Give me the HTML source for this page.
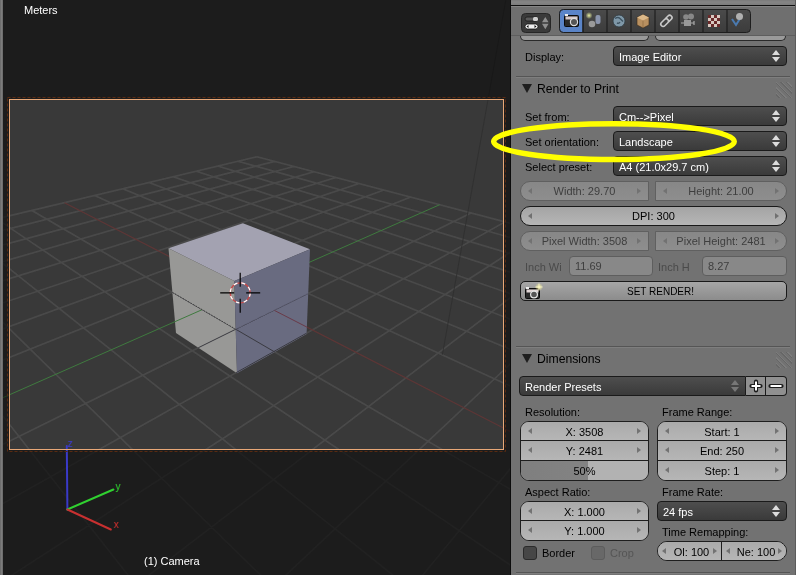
<!DOCTYPE html>
<html><head><meta charset="utf-8">
<style>
*{box-sizing:border-box;margin:0;padding:0}
html,body{width:796px;height:575px;overflow:hidden;background:#1c1c1c;font-family:"Liberation Sans",sans-serif;font-size:11px}
#panel{will-change:transform;position:absolute;left:511px;top:0;width:285px;height:575px;background:#727272;overflow:hidden}
.lbl{position:absolute;color:#000;font-size:11px;line-height:15px;white-space:nowrap}
.dl{color:#4a4a4a}
.dl2{color:#555}
.sep{position:absolute;left:5px;width:274px;height:2px;border-top:1px solid #555;border-bottom:1px solid #7e7e7e}
.phdr{position:absolute;left:0;width:285px;height:20px}
.phdr span{position:absolute;left:26px;top:0px;font-size:12.2px;color:#000;line-height:14px}
.tri{position:absolute;left:10.5px;top:1.5px;width:0;height:0;border-left:5.3px solid transparent;border-right:5.3px solid transparent;border-top:9.5px solid #1e1e1e}
.grip{position:absolute;left:265px;top:0;width:16px;height:16px;background:repeating-linear-gradient(45deg,transparent 0 2px,rgba(0,0,0,.10) 2px 3px,rgba(255,255,255,.07) 3px 4px)}
.menu{position:absolute;height:20px;border:1px solid #1a1a1a;border-radius:4px;background:linear-gradient(#4e4e4e,#3a3a3a);color:#fff}
.menu span{position:absolute;left:5px;top:4px;line-height:13px;white-space:nowrap}
.ud2{position:absolute;right:6px;top:3px;width:8px;height:13px}
.ud2:before{content:"";position:absolute;left:0;top:0;border-left:4px solid transparent;border-right:4px solid transparent;border-bottom:5px solid #ddd}
.ud2:after{content:"";position:absolute;left:0;top:7px;border-left:4px solid transparent;border-right:4px solid transparent;border-top:5px solid #ddd}
.ud2.dim:before{border-bottom-color:#777}.ud2.dim:after{border-top-color:#777}
.num{position:absolute;height:20px;border:1px solid #191919;background:linear-gradient(#a4a4a4,#b6b6b6);color:#000;text-align:center}
.num span{display:block;line-height:18px;white-space:nowrap}
.num.dis{border-color:#606060;background:linear-gradient(#878787,#8e8e8e);color:#3e3e3e}
.al,.ar{position:absolute;top:6px;width:0;height:0;border-top:3.5px solid transparent;border-bottom:3.5px solid transparent}
.al{left:7px;border-right:4px solid rgba(0,0,0,.35)}
.ar{right:7px;border-left:4px solid rgba(0,0,0,.35)}
.dis .al{border-right-color:rgba(0,0,0,.18)}.dis .ar{border-left-color:rgba(0,0,0,.18)}
.txt{position:absolute;height:20px;border:1px solid #5e5e5e;border-radius:4px;background:#888}
.txt span{position:absolute;left:5px;top:3px;line-height:13px;color:#3e3e3e}
.btn{position:absolute;height:20px;border:1px solid #191919;border-radius:5px;background:linear-gradient(#a6a6a6,#8c8c8c);text-align:center}
.btn span{line-height:18px;color:#000}
.pm{position:absolute;height:20px;border:1px solid #1a1a1a;border-left:none;background:#909090}
.plus,.minus{position:absolute}
.col{position:absolute;border:1px solid #1e1e1e;border-radius:9px;overflow:hidden;background:#b0b0b0}
.row{position:relative;height:19px;border-bottom:1px solid #1e1e1e;background:linear-gradient(#aaaaaa,#b6b6b6);text-align:center}
.row:nth-child(2){height:20px}.row:last-child{border-bottom:none;height:19px}
.row span{line-height:20px;white-space:nowrap}
.row.sl{background:linear-gradient(90deg,#7f7f7f 0,#838383 53%,#b2b2b2 53%)}
.chk{position:absolute;width:14px;height:14px;border:1px solid #2a2a2a;border-radius:3px;background:#464646}
.chk.dis{border-color:#5c5c5c;background:#686868}
.tog{position:absolute;left:10px;top:13px;width:30px;height:20px;border-radius:4px;background:#3a3a3a;border:1px solid #262626}
.tabs{position:absolute;left:48px;top:9px;width:192px;height:24px;display:flex;border:1px solid #222;border-radius:4px;overflow:hidden;background:#3e3e3e}
.tab{flex:1;border-right:1px solid #222;background:linear-gradient(#474747,#3a3a3a)}
.tab.last{border-right:none}
.tab.act{background:#5680c2}
.partial{position:absolute;top:36px;height:5px;background:#9a9a9a;border:1px solid #2a2a2a;border-top:none}
</style></head><body>
<svg width="511" height="575" viewBox="0 0 511 575" style="position:absolute;left:0;top:0"><rect x="0" y="0" width="511" height="575" fill="#393939"/><filter id="bl" x="-5%" y="-5%" width="110%" height="110%"><feGaussianBlur stdDeviation="0.45"/></filter><clipPath id="fin"><rect x="9" y="99" width="495" height="351"/></clipPath><clipPath id="fout"><path d="M0 0H511V575H0Z M9 99V450H504V99Z" clip-rule="evenodd"/></clipPath><g clip-path="url(#fin)"><path d="M-295.1 288.6L256.9 156.7 M-295.1 288.6L-67.7 2806.4 M-293.5 305.5L274.8 161.4 M-233.9 274.0L267.4 1828.1 M-291.8 324.5L293.8 166.4 M-178.7 260.8L429.0 1356.2 M-289.9 346.1L314.1 171.7 M-128.7 248.9L524.2 1078.4 M-287.6 370.8L335.8 177.4 M-83.2 238.0L586.9 895.3 M-285.1 399.4L359.0 183.5 M-41.5 228.0L631.3 765.6 M-282.0 432.8L383.9 190.1 M-3.3 218.9L664.4 668.9 M-278.5 472.4L410.7 197.1 M31.9 210.5L690.1 594.0 M-268.9 578.6L471.0 213.0 M94.7 195.5L727.2 485.5 M-262.2 652.1L505.0 221.9 M122.8 188.8L741.1 445.0 M-253.6 747.2L542.1 231.6 M148.9 182.5L752.8 410.8 M-242.1 875.2L582.6 242.3 M173.3 176.7L762.9 381.5 M-225.7 1056.4L627.2 254.0 M196.2 171.2L771.5 356.2 M-200.7 1332.9L676.3 266.9 M217.7 166.1L779.1 334.1 M-157.9 1806.7L730.9 281.2 M237.9 161.2L785.8 314.6 M-67.7 2806.4L791.7 297.2 M256.9 156.7L791.7 297.2" stroke="#4a4a4a" stroke-width="1.6" fill="none" filter="url(#bl)"/></g><g clip-path="url(#fout)"><path d="M-295.1 288.6L256.9 156.7 M-295.1 288.6L-67.7 2806.4 M-293.5 305.5L274.8 161.4 M-233.9 274.0L267.4 1828.1 M-291.8 324.5L293.8 166.4 M-178.7 260.8L429.0 1356.2 M-289.9 346.1L314.1 171.7 M-128.7 248.9L524.2 1078.4 M-287.6 370.8L335.8 177.4 M-83.2 238.0L586.9 895.3 M-285.1 399.4L359.0 183.5 M-41.5 228.0L631.3 765.6 M-282.0 432.8L383.9 190.1 M-3.3 218.9L664.4 668.9 M-278.5 472.4L410.7 197.1 M31.9 210.5L690.1 594.0 M-268.9 578.6L471.0 213.0 M94.7 195.5L727.2 485.5 M-262.2 652.1L505.0 221.9 M122.8 188.8L741.1 445.0 M-253.6 747.2L542.1 231.6 M148.9 182.5L752.8 410.8 M-242.1 875.2L582.6 242.3 M173.3 176.7L762.9 381.5 M-225.7 1056.4L627.2 254.0 M196.2 171.2L771.5 356.2 M-200.7 1332.9L676.3 266.9 M217.7 166.1L779.1 334.1 M-157.9 1806.7L730.9 281.2 M237.9 161.2L785.8 314.6 M-67.7 2806.4L791.7 297.2 M256.9 156.7L791.7 297.2" stroke="#434343" stroke-width="1.4" fill="none" filter="url(#bl)"/></g><line x1="64.5" y1="202.7" x2="710.6" y2="534.3" stroke="#5e3636" stroke-width="1.2"/><line x1="-274.2" y1="520.1" x2="439.7" y2="204.7" stroke="#3f7a3f" stroke-width="1"/><line x1="442.4" y1="354.7" x2="555.9" y2="-280.3" stroke="#2f2f2f" stroke-width="1" stroke-opacity="0.85"/><polygon points="168.5,248.3 234.3,281.0 310.0,249.2 242.9,223.3" fill="#a3a2b1"/><polygon points="168.5,248.3 234.3,281.0 237.0,373.2 176.0,332.9" fill="#989896"/><polygon points="234.3,281.0 310.0,249.2 306.6,334.1 237.0,373.2" fill="#696b80"/><clipPath id="lh"><polygon points="172.4,292.3 235.7,329.2 308.2,293.4 306.6,334.1 237.0,373.2 176.0,332.9"/></clipPath><g clip-path="url(#lh)"><path d="M-295.1 288.6L256.9 156.7 M-295.1 288.6L-67.7 2806.4 M-293.5 305.5L274.8 161.4 M-233.9 274.0L267.4 1828.1 M-291.8 324.5L293.8 166.4 M-178.7 260.8L429.0 1356.2 M-289.9 346.1L314.1 171.7 M-128.7 248.9L524.2 1078.4 M-287.6 370.8L335.8 177.4 M-83.2 238.0L586.9 895.3 M-285.1 399.4L359.0 183.5 M-41.5 228.0L631.3 765.6 M-282.0 432.8L383.9 190.1 M-3.3 218.9L664.4 668.9 M-278.5 472.4L410.7 197.1 M31.9 210.5L690.1 594.0 M-268.9 578.6L471.0 213.0 M94.7 195.5L727.2 485.5 M-262.2 652.1L505.0 221.9 M122.8 188.8L741.1 445.0 M-253.6 747.2L542.1 231.6 M148.9 182.5L752.8 410.8 M-242.1 875.2L582.6 242.3 M173.3 176.7L762.9 381.5 M-225.7 1056.4L627.2 254.0 M196.2 171.2L771.5 356.2 M-200.7 1332.9L676.3 266.9 M217.7 166.1L779.1 334.1 M-157.9 1806.7L730.9 281.2 M237.9 161.2L785.8 314.6 M-67.7 2806.4L791.7 297.2 M256.9 156.7L791.7 297.2" stroke="#3a3a40" stroke-width="1" fill="none"/><line x1="64.5" y1="202.7" x2="710.6" y2="534.3" stroke="#6a3a48" stroke-width="1"/><line x1="-274.2" y1="520.1" x2="439.7" y2="204.7" stroke="#3f7a3f" stroke-width="1"/></g><line x1="172.4" y1="292.3" x2="235.7" y2="329.2" stroke="#404040" stroke-width="1" stroke-dasharray="1.5 1.5"/><line x1="235.7" y1="329.2" x2="308.2" y2="293.4" stroke="#5a5a70" stroke-width="1" stroke-dasharray="1.5 1.5"/><path d="M0 0H511V575H0Z M9 99V450H504V99Z" fill="#000" fill-opacity="0.5" fill-rule="evenodd"/><g stroke-width="2" stroke-linecap="round"><line x1="67.4" y1="509.5" x2="66.8" y2="446" stroke="#3a3ac8"/><line x1="67.4" y1="509.5" x2="113.4" y2="489.5" stroke="#30d030"/><line x1="67.4" y1="509.5" x2="110.8" y2="529.5" stroke="#c83030"/></g><text x="68" y="447" fill="#3a3ac8" font-size="10" font-family="Liberation Sans">z</text><text x="115.5" y="490" fill="#30d030" font-size="10" font-family="Liberation Sans">y</text><text x="113.5" y="528" fill="#c83030" font-size="10" font-family="Liberation Sans">x</text><rect x="7.5" y="97.5" width="498" height="354" fill="none" stroke="#5a2a10" stroke-width="1" stroke-dasharray="3 2"/><rect x="9.5" y="99.5" width="494" height="350" fill="none" stroke="#e8a878" stroke-width="1"/><circle cx="240.2" cy="292.8" r="10" fill="none" stroke="#c84848" stroke-width="1.3"/><circle cx="240.2" cy="292.8" r="10" fill="none" stroke="#fff" stroke-width="1.3" stroke-dasharray="4 4"/><path d="M220.2 292.8h14M246.2 292.8h14M240.2 272.8v14M240.2 298.8v14" stroke="#000" stroke-width="1.2"/><rect x="0" y="0" width="3" height="575" fill="#6e6e6e"/><rect x="1" y="0" width="1" height="575" fill="#7c7c7c"/><rect x="510" y="0" width="1" height="575" fill="#0c0c0c"/></svg><div id="panel">
  <div style="position:absolute;left:0;top:0;width:285px;height:5px;background:linear-gradient(#7a7a7a,#858585 40%,#7c7c7c)"></div>
  <div style="position:absolute;left:0;top:6px;width:285px;height:30px;background:#6f6f6f"></div>
  <div style="position:absolute;left:0;top:4.5px;width:285px;height:1.5px;background:#0e0e0e"></div>
  <div style="position:absolute;left:0;top:6px;width:285px;height:1px;background:#858585"></div>
  <!-- header -->
  <svg width="285" height="36" style="position:absolute;left:0;top:0">
    <defs>
      <linearGradient id="tg" x1="0" y1="0" x2="0" y2="1"><stop offset="0" stop-color="#4a4a4a"/><stop offset="1" stop-color="#3c3c3c"/></linearGradient>
      <radialGradient id="glow" cx="0.5" cy="0.5" r="0.5"><stop offset="0" stop-color="#e8f0a0"/><stop offset="1" stop-color="#e8f0a0" stop-opacity="0"/></radialGradient>
    </defs>
    <rect x="10.5" y="13.5" width="29" height="19" rx="4" fill="#3a3a3a" stroke="#262626"/>
    <rect x="14" y="17" width="13" height="4" rx="2" fill="#5a5a5a" stroke="#1a1a1a" stroke-width=".8"/>
    <rect x="22" y="17" width="5" height="4" rx="1.5" fill="#d0d0d0"/>
    <rect x="14" y="24" width="13" height="5" rx="2.5" fill="#f0f0f0" stroke="#111" stroke-width=".8"/>
    <path d="M15.5 26.5l2-1.6v3.2zM25.5 26.5l-2-1.6v3.2z" fill="#111"/>
    <path d="M31 22.2l3.3-5.2 3.3 5.2zM31 23.8l3.3 5.4 3.3-5.4z" fill="#909090"/>
    <rect x="48.5" y="9.5" width="191" height="23" rx="4" fill="url(#tg)" stroke="#1e1e1e"/>
    <path d="M52.5 9.5h19.5v23h-19.5a4 4 0 0 1-4-4v-15a4 4 0 0 1 4-4z" fill="#5a84c8" stroke="#1e1e1e"/>
    <path d="M72 10v22M96 10v22M120 10v22M144 10v22M168 10v22M192 10v22M216 10v22" stroke="#1e1e1e" stroke-width="1.2"/>
    <!-- camera icon -->
    <rect x="53.5" y="15.5" width="14" height="11" rx="1" fill="#2a2a2a" stroke="#0a0a0a"/>
    <rect x="54.5" y="16.5" width="12" height="3" fill="#d8c8c8"/>
    <rect x="54" y="14" width="3" height="2" fill="#eee"/>
    <circle cx="63" cy="22" r="3.6" fill="#555" stroke="#ddd" stroke-width="1.2"/>
    <!-- scene -->
    <circle cx="78" cy="15.5" r="3.5" fill="url(#glow)"/>
    <circle cx="81" cy="24" r="3.3" fill="#9a9a9a"/>
    <rect x="84.5" y="15" width="5" height="9" rx="2" fill="#8a94ac"/>
    <!-- world -->
    <circle cx="108" cy="21" r="6" fill="#7f98a8" stroke="#2e3a40" stroke-width=".8"/>
    <path d="M104 18.5q3-2 5 0t3 3M106 23q2 1 3-1" stroke="#3e5260" stroke-width="1.4" fill="none"/>
    <!-- object cube -->
    <path d="M132 14.5l6 3v7.5l-6 3-6-3v-7.5z" fill="#b89060" stroke="#3a2a18" stroke-width=".6"/>
    <path d="M126 17.5l6 3 6-3-6-3z" fill="#dcb888"/>
    <path d="M132 20.5v7" stroke="#8a6a40" stroke-width=".7"/>
    <!-- chain -->
    <path d="M150.5 22.5l3-3a2.3 2.3 0 0 1 3.3 3.3l-3 3a2.3 2.3 0 0 1-3.3-3.3z M154 19l3-3a2.3 2.3 0 0 1 3.3 3.3l-3 3" stroke="#c8c8c8" stroke-width="1.6" fill="none"/>
    <!-- movie camera -->
    <circle cx="175" cy="17" r="2.8" fill="#888"/><circle cx="180" cy="16.5" r="3" fill="#888"/>
    <rect x="173" y="20" width="7" height="6" fill="#999"/><path d="M170 23h3M180 23h3v-2v4" stroke="#aaa" stroke-width="1.2" fill="none"/>
    <!-- texture -->
    <rect x="197" y="15" width="12" height="12" fill="#d8c8c0"/>
    <path d="M197 15h3v3h-3zM203 15h3v3h-3zM200 18h3v3h-3zM206 18h3v3h-3zM197 21h3v3h-3zM203 21h3v3h-3zM200 24h3v3h-3zM206 24h3v3h-3z" fill="#6a2a2a"/>
    <!-- material/check -->
    <path d="M221 19l4 6 5-8" stroke="#4a7ab0" stroke-width="2" fill="none"/>
    <circle cx="228.5" cy="16.5" r="3.5" fill="#b0b0b0"/>
  </svg>
  <div style="position:absolute;left:0;top:35px;width:285px;height:1px;background:#5e5e5e"></div>
  <div class="partial" style="left:9px;width:129px;border-radius:0 0 6px 6px"></div>
  <div class="partial" style="left:144px;width:131px;border-radius:0 0 6px 6px"></div>

  <div class="lbl" style="left:14px;top:50px">Display:</div>
  <div class="menu" style="left:102px;top:46px;width:174px"><span>Image Editor</span><i class="ud2"></i></div>
  <div class="sep" style="top:76px"></div>

  <div class="phdr" style="top:82px"><b class="tri"></b><span>Render to Print</span><i class="grip"></i></div>

  <div class="lbl" style="left:14px;top:110px">Set from:</div>
  <div class="menu" style="left:102px;top:106px;width:174px"><span>Cm--&gt;Pixel</span><i class="ud2"></i></div>
  <div class="lbl" style="left:14px;top:135px">Set orientation:</div>
  <div class="menu" style="left:102px;top:131px;width:174px"><span>Landscape</span><i class="ud2"></i></div>
  <div class="lbl" style="left:14px;top:160px">Select preset:</div>
  <div class="menu" style="left:102px;top:156px;width:174px"><span>A4 (21.0x29.7 cm)</span><i class="ud2"></i></div>

  <div class="num dis" style="left:9px;top:181px;width:129px;border-radius:10px 0 0 10px"><i class="al"></i><span>Width: 29.70</span><i class="ar"></i></div>
  <div class="num dis" style="left:144px;top:181px;width:132px;border-radius:0 10px 10px 0"><i class="al"></i><span>Height: 21.00</span><i class="ar"></i></div>
  <div class="num" style="left:9px;top:206px;width:267px;border-radius:10px"><i class="al"></i><span>DPI: 300</span><i class="ar"></i></div>
  <div class="num dis" style="left:9px;top:231px;width:129px;border-radius:10px 0 0 10px"><i class="al"></i><span>Pixel Width: 3508</span><i class="ar"></i></div>
  <div class="num dis" style="left:144px;top:231px;width:132px;border-radius:0 10px 10px 0"><i class="al"></i><span>Pixel Height: 2481</span><i class="ar"></i></div>

  <div class="lbl dl" style="left:14px;top:260px">Inch Wi</div>
  <div class="txt" style="left:58px;top:256px;width:84px"><span>11.69</span></div>
  <div class="lbl dl" style="left:147px;top:260px">Inch H</div>
  <div class="txt" style="left:191px;top:256px;width:85px"><span>8.27</span></div>

  <div class="btn" style="left:9px;top:281px;width:267px"><svg width="20" height="18" style="position:absolute;left:2px;top:1px"><radialGradient id="spk"><stop offset="0" stop-color="#fff8a0"/><stop offset="1" stop-color="#fff8a0" stop-opacity="0"/></radialGradient><rect x="2.5" y="5.5" width="14" height="10" rx="1" fill="#2a2a2a" stroke="#0a0a0a"/><rect x="3.5" y="6.5" width="12" height="3" fill="#e0d4d4"/><rect x="3" y="4" width="3" height="2" fill="#eee"/><circle cx="11" cy="11.5" r="3.4" fill="#555" stroke="#e8e8e8" stroke-width="1.2"/><circle cx="16" cy="4" r="4" fill="url(#spk)"/><path d="M16 0.5v7M12.5 4h7" stroke="#fffbd0" stroke-width=".8"/></svg><span style="font-size:10px;padding-left:14px;position:relative;top:0.5px">SET RENDER!</span></div>

  <div class="sep" style="top:346px"></div>
  <div class="phdr" style="top:352px"><b class="tri"></b><span>Dimensions</span><i class="grip"></i></div>

  <div class="menu" style="left:8px;top:376px;width:227px;border-radius:4px 0 0 4px"><span>Render Presets</span><i class="ud2 dim"></i></div>
  <div class="pm" style="left:235px;top:376px;width:20px;border-radius:0"><svg width="20" height="20" style="position:absolute;left:0;top:-1px"><path d="M10 5.5v9M5.5 10h9" stroke="#1a1a1a" stroke-width="4.2" stroke-linecap="round"/><path d="M10 5.5v9M5.5 10h9" stroke="#fff" stroke-width="2"/></svg></div>
  <div class="pm" style="left:255px;top:376px;width:21px;border-radius:0 4px 4px 0"><svg width="20" height="20" style="position:absolute;left:0;top:-1px"><path d="M4.5 10h11" stroke="#1a1a1a" stroke-width="4.2" stroke-linecap="round"/><path d="M4.5 10h11" stroke="#fff" stroke-width="2"/></svg></div>

  <div class="lbl" style="left:14px;top:405px">Resolution:</div>
  <div class="lbl" style="left:151px;top:405px">Frame Range:</div>

  <div class="col" style="left:9px;top:421px;width:129px">
    <div class="row"><i class="al"></i><span>X: 3508</span><i class="ar"></i></div>
    <div class="row"><i class="al"></i><span>Y: 2481</span><i class="ar"></i></div>
    <div class="row sl"><span>50%</span></div>
  </div>
  <div class="col" style="left:146px;top:421px;width:130px">
    <div class="row"><i class="al"></i><span>Start: 1</span><i class="ar"></i></div>
    <div class="row"><i class="al"></i><span>End: 250</span><i class="ar"></i></div>
    <div class="row"><i class="al"></i><span>Step: 1</span><i class="ar"></i></div>
  </div>

  <div class="lbl" style="left:14px;top:485px">Aspect Ratio:</div>
  <div class="lbl" style="left:151px;top:485px">Frame Rate:</div>
  <div class="col" style="left:9px;top:501px;width:129px">
    <div class="row"><i class="al"></i><span>X: 1.000</span><i class="ar"></i></div>
    <div class="row"><i class="al"></i><span>Y: 1.000</span><i class="ar"></i></div>
  </div>
  <div class="menu" style="left:146px;top:501px;width:130px"><span>24 fps</span><i class="ud2"></i></div>
  <div class="lbl" style="left:151px;top:525px">Time Remapping:</div>
  <div class="col" style="left:146px;top:541px;width:130px;height:20px;border-radius:10px;display:flex">
    <div class="row" style="width:64px;border-right:1px solid #1e1e1e;height:18px;border-bottom:none"><i class="al" style="left:4px"></i><span style="margin-left:4px">Ol: 100</span><i class="ar" style="right:4px"></i></div>
    <div class="row" style="flex:1;height:18px"><i class="al" style="left:4px"></i><span style="margin-left:4px">Ne: 100</span><i class="ar" style="right:4px"></i></div>
  </div>

  <div class="chk" style="left:12px;top:546px"></div>
  <div class="lbl" style="left:31px;top:546px">Border</div>
  <div class="chk dis" style="left:80px;top:546px"></div>
  <div class="lbl dl2" style="left:99px;top:546px">Crop</div>
  <div class="sep" style="top:572px"></div>
  <div style="position:absolute;left:284px;top:0;width:1px;height:575px;background:#5c5c5c"></div>
</div>
<div style="position:absolute;left:24px;top:4px;color:#fff;will-change:transform;font-size:11px;line-height:13px">Meters</div>
<div style="position:absolute;left:144px;top:555px;color:#fff;will-change:transform;font-size:11px;line-height:13px">(1) Camera</div>
<svg width="796" height="575" style="position:absolute;left:0;top:0;pointer-events:none"><ellipse cx="614" cy="141.6" rx="120.3" ry="17.9" fill="none" stroke="#ffff00" stroke-width="5.4"/></svg>
</body></html>
